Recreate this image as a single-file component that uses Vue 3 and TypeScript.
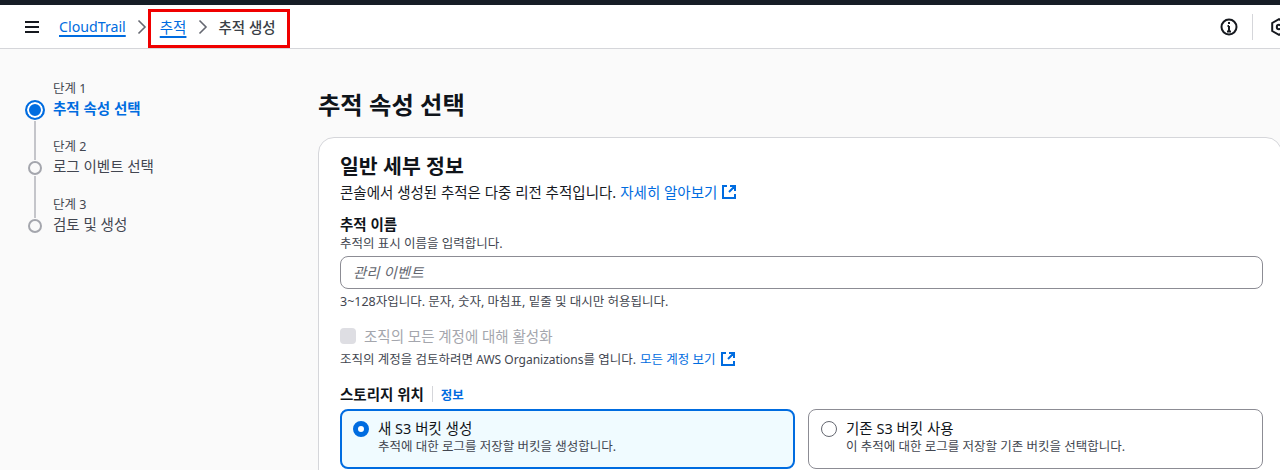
<script setup lang="ts">
interface Step {
  label: string;
  title: string;
  active?: boolean;
}

const steps: Step[] = [
  { label: "단계 1", title: "추적 속성 선택", active: true },
  { label: "단계 2", title: "로그 이벤트 선택" },
  { label: "단계 3", title: "검토 및 생성" },
];
</script>

<template>
  <div class="page">
    <div class="topbar"></div>
    <header class="header">
      <svg class="menu" width="16" height="14" viewBox="0 0 16 14">
        <path d="M1 2h14M1 7h14M1 12h14" stroke="#16191f" stroke-width="2" fill="none" />
      </svg>
      <nav class="crumbs">
        <a class="link under latin">CloudTrail</a>
        <svg class="chev" width="10" height="16" viewBox="0 0 10 16"><path d="M1.5 1.5 8 8l-6.5 6.5" /></svg>
        <a class="link under">추적</a>
        <svg class="chev" width="10" height="16" viewBox="0 0 10 16"><path d="M1.5 1.5 8 8l-6.5 6.5" /></svg>
        <span class="current">추적 생성</span>
      </nav>
      <div class="highlight"></div>
      <div class="tools">
        <svg width="18" height="18" viewBox="0 0 18 18" fill="none" stroke="#16191f" stroke-width="2">
          <circle cx="9" cy="9" r="7.5" />
          <path d="M9 8v5.5M7 13.5h4M7.5 8H9" />
          <path d="M9 4v2" />
        </svg>
        <span class="divider"></span>
        <svg width="18" height="18" viewBox="0 0 18 18" fill="none" stroke="#16191f" stroke-width="2">
          <path d="M9 1.2 15.8 5v8L9 16.8 2.2 13V5z" />
          <circle cx="9" cy="9" r="2.2" />
        </svg>
      </div>
    </header>

    <div class="body">
      <aside class="side">
        <div class="rail">
          <span class="dot dot-active"></span>
          <span class="line first"></span>
          <span class="dot"></span>
          <span class="line"></span>
          <span class="dot"></span>
        </div>
        <ol class="steps">
          <li v-for="step in steps" :key="step.label" class="step">
            <div class="step-label">{{ step.label }}</div>
            <div class="step-title" :class="{ on: step.active }">{{ step.title }}</div>
          </li>
        </ol>
      </aside>

      <main class="main">
        <h1 class="page-title">추적 속성 선택</h1>
        <section class="card">
          <h2 class="card-title">일반 세부 정보</h2>
          <p class="card-desc">
            콘솔에서 생성된 추적은 다중 리전 추적입니다.
            <a class="link">자세히 알아보기</a>
            <svg class="ext" width="16" height="16" viewBox="0 0 16 16" fill="none" stroke="#006ce0" stroke-width="2">
              <path d="M6 2H2v12h12v-4M9 2h5v5M14 2 8 8" />
            </svg>
          </p>

          <div class="field-label">추적 이름</div>
          <div class="hint name-hint">추적의 표시 이름을 입력합니다.</div>
          <div class="input">관리 이벤트</div>
          <div class="hint constraint">3~128자입니다. 문자, 숫자, 마침표, 밑줄 및 대시만 허용됩니다.</div>

          <div class="check-row">
            <span class="check"></span>
            <span class="check-text">조직의 모든 계정에 대해 활성화</span>
          </div>
          <div class="hint org">
            <span>조직의 계정을 검토하려면 <span class="latin-small">AWS Organizations</span>를 엽니다.</span>
            <a class="link">모든 계정 보기</a>
            <svg class="ext" width="16" height="16" viewBox="0 0 16 16" fill="none" stroke="#006ce0" stroke-width="2">
              <path d="M6 2H2v12h12v-4M9 2h5v5M14 2 8 8" />
            </svg>
          </div>

          <div class="storage-head">
            <span class="field-label inline">스토리지 위치</span>
            <span class="sep"></span>
            <a class="link info">정보</a>
          </div>
          <div class="tiles">
            <div class="tile selected">
              <span class="radio radio-on"></span>
              <div>
                <div class="tile-title">새 S3 버킷 생성</div>
                <div class="hint">추적에 대한 로그를 저장할 버킷을 생성합니다.</div>
              </div>
            </div>
            <div class="tile">
              <span class="radio"></span>
              <div>
                <div class="tile-title">기존 S3 버킷 사용</div>
                <div class="hint">이 추적에 대한 로그를 저장할 기존 버킷을 선택합니다.</div>
              </div>
            </div>
          </div>
        </section>
      </main>
    </div>
  </div>
</template>

<style>
html,
body {
  margin: 0;
  overflow: hidden;
}
</style>

<style scoped>
.page {
  position: relative;
  width: 1280px;
  height: 470px;
  overflow: hidden;
  background: #fafafa;
  color: #16191f;
  font-family: "Noto Sans", "Noto Sans CJK KR", sans-serif;
  font-size: 14.5px;
}

.topbar {
  height: 5px;
  background: #161d26;
}

.header {
  display: flex;
  align-items: center;
  height: 44px;
  box-sizing: border-box;
  padding-left: 24px;
  background: #fff;
  border-bottom: 1px solid #d5d6da;
}
.menu {
  margin-right: 19px;
}
.crumbs {
  display: flex;
  align-items: center;
}
.link {
  color: #006ce0;
}
.under {
  font-size: 14.5px;
  text-decoration: underline;
  text-decoration-thickness: 1.5px;
  text-underline-offset: 3px;
}
.under.latin {
  font-size: 14.2px;
}
.chev {
  margin: 0 13px 0 11px;
  fill: none;
  stroke: #656871;
  stroke-width: 1.6;
}
.crumbs .chev:nth-of-type(2) {
  margin: 0 10px 0 12px;
}
.current {
  color: #3a3f47;
  font-weight: 500;
  font-size: 14.5px;
}
.highlight {
  position: absolute;
  left: 148px;
  top: 9px;
  width: 142px;
  height: 39px;
  box-sizing: border-box;
  border: 3px solid #f00000;
}
.tools {
  display: flex;
  align-items: center;
  margin-left: auto;
  gap: 14px;
  margin-right: -8px;
}
.divider {
  width: 1px;
  height: 26px;
  background: #d5d6da;
  margin-right: 3px;
}

.body {
  display: flex;
}
.side {
  display: flex;
  width: 318px;
  flex: none;
  box-sizing: border-box;
  padding: 32px 0 0 25px;
}
.rail {
  display: flex;
  flex-direction: column;
  align-items: center;
  width: 20px;
  padding-top: 19px;
  margin-right: 8px;
}
.dot {
  width: 14px;
  height: 14px;
  box-sizing: border-box;
  border: 2px solid #a4a6ad;
  border-radius: 50%;
  flex: none;
}
.dot-active {
  width: 20px;
  height: 20px;
  border: 2px solid #006ce0;
  background: #006ce0;
  box-shadow: inset 0 0 0 2px #fff;
}
.line {
  width: 2px;
  height: 42px;
  background: #c4c5ca;
  margin: 1px 0;
}
.line.first {
  height: 39px;
}
.steps {
  list-style: none;
  margin: 0;
  padding: 0;
}
.step {
  height: 58px;
}
.step-label {
  font-size: 12.5px;
  line-height: 16px;
  color: #424650;
}
.step-title {
  font-size: 14.5px;
  line-height: 22px;
  color: #424650;
}
.step-title.on {
  color: #006ce0;
  font-weight: 700;
}

.main {
  flex: 1;
  min-width: 0;
  padding-top: 38px;
}
.page-title {
  margin: 0 0 14px;
  font-size: 24.3px;
  line-height: 36px;
  font-weight: 700;
  color: #0f141a;
}
.card {
  width: 964px;
  height: 400px;
  box-sizing: border-box;
  padding: 15px 17px 0 21px;
  background: #fff;
  border: 1px solid #d5d6da;
  border-radius: 16px;
}
.card-title {
  margin: 0 0 1px;
  font-size: 20.5px;
  line-height: 26px;
  font-weight: 700;
  color: #0f141a;
}
.card-desc {
  display: flex;
  align-items: center;
  gap: 4px;
  margin: 0 0 11px;
  font-size: 14.5px;
  line-height: 24px;
  color: #16191f;
}
.field-label {
  font-size: 14.5px;
  line-height: 18px;
  font-weight: 700;
  color: #0f141a;
}
.field-label.inline {
  line-height: 20px;
}
.hint {
  font-size: 12.5px;
  line-height: 17px;
  color: #424650;
}
.name-hint {
  margin-top: 2px;
}
.latin-small {
  font-size: 12px;
}
.input {
  width: 923px;
  height: 33px;
  box-sizing: border-box;
  margin-top: 4px;
  padding: 0 12px;
  border: 1px solid #8c8c94;
  border-radius: 8px;
  background: #fff;
  font-style: italic;
  font-size: 14.5px;
  line-height: 30px;
  color: #656871;
}
.constraint {
  margin-top: 4px;
}
.check-row {
  display: flex;
  align-items: center;
  gap: 8px;
  margin-top: 16px;
}
.check {
  width: 16px;
  height: 16px;
  border-radius: 4px;
  background: #dedee3;
}
.check-text {
  font-size: 14.5px;
  line-height: 20px;
  color: #a4a6ad;
}
.org {
  display: flex;
  align-items: center;
  gap: 4px;
  margin-top: 4px;
  height: 18px;
}
.storage-head {
  display: flex;
  align-items: center;
  margin-top: 16px;
}
.sep {
  width: 1px;
  height: 16px;
  background: #d5d6da;
  margin: 0 8px;
}
.info {
  font-size: 12.5px;
  font-weight: 700;
}
.tiles {
  display: flex;
  gap: 13px;
  margin-top: 5px;
}
.tile {
  display: flex;
  flex: none;
  gap: 9px;
  width: 455px;
  height: 60px;
  box-sizing: border-box;
  padding: 8px 12px;
  border: 1px solid #8c8c94;
  border-radius: 8px;
  background: #fff;
}
.tile.selected {
  border: 2px solid #006ce0;
  background: #f0fbff;
  padding: 7px 11px;
}
.radio {
  flex: none;
  width: 16px;
  height: 16px;
  margin-top: 3px;
  box-sizing: border-box;
  border: 1px solid #656871;
  border-radius: 50%;
  background: #fff;
}
.radio-on {
  border: 5px solid #006ce0;
}
.tile-title {
  font-size: 14.5px;
  line-height: 20px;
  color: #0f141a;
}
</style>
